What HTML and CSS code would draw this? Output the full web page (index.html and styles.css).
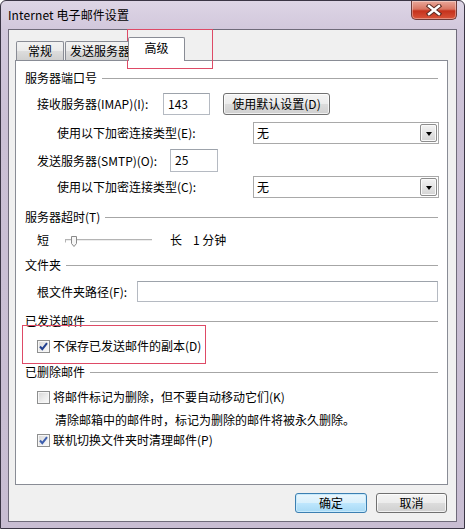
FILE: index.html
```html
<!DOCTYPE html>
<html lang="zh-CN">
<head>
<meta charset="utf-8">
<title>Internet 电子邮件设置</title>
<link rel="stylesheet" href="styles.css">
</head>
<body>
<div class="window">
  <div class="titlebar">
    <span class="title">Internet 电子邮件设置</span>
    <div class="close">
      <svg width="16" height="12" viewBox="0 0 16 12">
        <path d="M3 2 L13 10 M13 2 L3 10" stroke="#5a2a22" stroke-width="4.4" stroke-linecap="square"/>
        <path d="M3 2 L13 10 M13 2 L3 10" stroke="#ffffff" stroke-width="2.4" stroke-linecap="square"/>
      </svg>
    </div>
  </div>
  <div class="client">
    <div class="tabs">
      <div class="tab t1">常规</div>
      <div class="tab t2">发送服务器</div>
      <div class="tab sel">高级</div>
    </div>
    <div class="panel">
      <div class="group r1"><span>服务器端口号</span><i class="line"></i></div>
      <div class="row r2 ind1">
        <span class="lbl w-imap">接收服务器(IMAP)(I):</span>
        <div class="input in-imap">143</div>
        <div class="btn btn-default-set">使用默认设置(D)</div>
      </div>
      <div class="row r3 ind2">
        <span class="lbl w-enc">使用以下加密连接类型(E):</span>
        <div class="combo"><span>无</span><i class="drop"><b></b></i></div>
      </div>
      <div class="row r4 ind1">
        <span class="lbl w-smtp">发送服务器(SMTP)(O):</span>
        <div class="input in-smtp">25</div>
      </div>
      <div class="row r5 ind2">
        <span class="lbl w-enc">使用以下加密连接类型(C):</span>
        <div class="combo"><span>无</span><i class="drop"><b></b></i></div>
      </div>
      <div class="group r6"><span>服务器超时(T)</span><i class="line"></i></div>
      <div class="row r7 ind1">
        <span class="lbl w-short">短</span>
        <svg class="slider" width="87" height="14" viewBox="0 0 87 14">
          <line x1="0" y1="4.5" x2="87" y2="4.5" stroke="#b4b4b4" stroke-width="1"/>
          <line x1="0" y1="5.5" x2="87" y2="5.5" stroke="#ececec" stroke-width="1"/>
          <path d="M0.5 4.5 V7.5" stroke="#b4b4b4" stroke-width="1"/>
          <path d="M6.5 1.5 H11.5 V8.5 L9 11.5 L6.5 8.5 Z" fill="#f6f6f6" stroke="#8a8a8a" stroke-width="1"/>
        </svg>
        <span class="lbl long">长</span>
        <span class="lbl minutes">1 分钟</span>
      </div>
      <div class="group r8"><span>文件夹</span><i class="line"></i></div>
      <div class="row r9 ind1">
        <span class="lbl w-root">根文件夹路径(F):</span>
        <div class="input in-root"></div>
      </div>
      <div class="group r10"><span>已发送邮件</span><i class="line"></i></div>
      <div class="row r11 ind1">
        <span class="check on"><svg width="11" height="11" viewBox="0 0 11 11"><path d="M2 5.5 L4.3 8.2 L9 2.2" fill="none" stroke="#22408f" stroke-width="2"/></svg></span>
        <span class="lbl ctext">不保存已发送邮件的副本(D)</span>
      </div>
      <div class="group r12"><span>已删除邮件</span><i class="line"></i></div>
      <div class="row r13 ind1">
        <span class="check"></span>
        <span class="lbl ctext">将邮件标记为删除，但不要自动移动它们(K)</span>
      </div>
      <div class="row r14 ind3">
        <span class="lbl">清除邮箱中的邮件时，标记为删除的邮件将被永久删除。</span>
      </div>
      <div class="row r15 ind1">
        <span class="check on"><svg width="11" height="11" viewBox="0 0 11 11"><path d="M2 5.5 L4.3 8.2 L9 2.2" fill="none" stroke="#3d5fae" stroke-width="2"/></svg></span>
        <span class="lbl ctext">联机切换文件夹时清理邮件(P)</span>
      </div>
    </div>
    <div class="buttons">
      <div class="btn ok">确定</div>
      <div class="btn cancel">取消</div>
    </div>
  </div>
</div>
<div class="mark mark-tab"></div>
<div class="mark mark-check"></div>
</body>
</html>
```

FILE: styles.css
```css
* { box-sizing: border-box; }
html, body { margin: 0; padding: 0; }
body {
  width: 465px;
  height: 529px;
  overflow: hidden;
  position: relative;
  background: #ffffff;
  font-family: "Noto Sans CJK SC", "Noto Sans", sans-serif;
  font-size: 12px;
  color: #000;
}
.window {
  width: 465px;
  height: 529px;
  border: 1px solid #3a3544;
  border-radius: 6px 6px 0 0;
  background: linear-gradient(180deg, #ddd5e5 0px, #d2c8dc 28px, #cbc0d5 120px, #c8bdd2 100%);
  padding: 0 7px 6px 7px;
  display: flex;
  flex-direction: column;
}
.titlebar {
  height: 28px;
  display: flex;
  align-items: flex-start;
}
.title {
  line-height: 28px;
  font-size: 12px;
  color: #000;
  letter-spacing: 0.1px;
}
.close {
  margin-left: auto;
  width: 46px;
  height: 19px;
  border: 1px solid #6e3b39;
  border-top: none;
  border-radius: 0 0 5px 5px;
  background: linear-gradient(180deg, #e9a89a 0%, #d87562 45%, #c5321c 55%, #d9543a 100%);
  display: flex;
  align-items: center;
  justify-content: center;
  box-shadow: inset 0 0 0 1px rgba(255,255,255,0.35);
}
.client {
  flex: 1;
  border: 1px solid #6f6b7a;
  background: #f0f0f0;
  display: flex;
  flex-direction: column;
}
.tabs {
  display: flex;
  align-items: flex-end;
  height: 23px;
  margin: 7px 0 0 6px;
  position: relative;
  z-index: 2;
}
.tab {
  height: 19px;
  border: 1px solid #898c95;
  border-bottom: none;
  background: linear-gradient(180deg, #f2f2f2 0%, #ebebeb 50%, #dddddd 51%, #cfcfcf 100%);
  display: flex;
  align-items: center;
  justify-content: center;
  line-height: 18px;
  border-radius: 2px 2px 0 0;
}
.t1 { width: 48px; margin-left: 1px; }
.t2 { width: 70px; margin-left: 1px; }
.sel {
  width: 57px;
  height: 24px;
  margin-left: -7px;
  margin-bottom: -1px;
  background: #ffffff;
  padding-bottom: 3px;
}
.panel {
  margin-left: 6px;
  width: 433px;
  height: 425px;
  border: 1px solid #898c95;
  background: #ffffff;
  padding: 8px 9px 0 9px;
  display: flex;
  flex-direction: column;
}
.group {
  height: 18px;
  display: flex;
  align-items: center;
  line-height: 18px;
}
.group .line {
  flex: 1;
  height: 1px;
  margin-left: 5px;
  background: #a6a6a6;
}
.row {
  display: flex;
  align-items: center;
  line-height: 18px;
}
.ind1 { padding-left: 12px; }
.ind2 { padding-left: 32px; }
.ind3 { padding-left: 30px; }
.r2 { height: 22px; margin-top: 6px; }
.r3 { height: 22px; margin-top: 7px; }
.r4 { height: 23px; margin-top: 5px; }
.r5 { height: 22px; margin-top: 4px; }
.r6 { margin-top: 10px; }
.r7 { height: 20px; margin-top: 4px; }
.r8 { margin-top: 6px; }
.r9 { height: 21px; margin-top: 7px; }
.r10 { margin-top: 10px; }
.r11 { height: 20px; margin-top: 6px; }
.r12 { margin-top: 7px; }
.r13 { height: 20px; margin-top: 6px; }
.r14 { height: 20px; margin-top: 3px; }
.r15 { height: 20px; margin-top: 0px; }
.lbl { white-space: nowrap; flex: none; }
.w-imap { width: 126px; }
.w-smtp { width: 133px; }
.w-enc { width: 196px; }
.w-short { width: 28px; }
.w-root { width: 100px; }
.long { margin-left: 18px; width: 23px; }
.input {
  height: 100%;
  border: 1px solid #b5bac2;
  border-top-color: #9da3ab;
  background: #fff;
  padding-left: 4px;
  line-height: 19px;
  flex: none;
}
.in-imap { width: 47px; }
.in-smtp { width: 48px; line-height: 20px; }
.in-root { width: 301px; }
.btn {
  border: 1px solid #707070;
  border-radius: 3px;
  background: linear-gradient(180deg, #f4f4f4 0%, #ececec 48%, #dcdcdc 52%, #d0d0d0 100%);
  box-shadow: inset 0 0 0 1px rgba(255,255,255,0.7);
  display: flex;
  align-items: center;
  justify-content: center;
  line-height: 18px;
  flex: none;
}
.btn-default-set {
  margin-left: 13px;
  width: 107px;
  height: 22px;
}
.combo {
  width: 186px;
  height: 22px;
  border: 1px solid #a9a9a9;
  background: #fff;
  display: flex;
  align-items: center;
  padding: 1px 1px 1px 3px;
  flex: none;
}
.combo span { flex: 1; line-height: 18px; }
.drop {
  width: 17px;
  height: 18px;
  border: 1px solid #8d8d8d;
  border-radius: 2px;
  background: linear-gradient(180deg, #f4f4f4 0%, #e4e4e4 50%, #d4d4d4 100%);
  display: flex;
  align-items: center;
  justify-content: center;
  box-shadow: inset 0 0 0 1px #fafafa;
}
.drop b {
  width: 0;
  height: 0;
  border-left: 3.5px solid transparent;
  border-right: 3.5px solid transparent;
  border-top: 4px solid #000;
  margin-top: 1px;
}
.slider { flex: none; margin-top: 4px; }
.check {
  width: 13px;
  height: 13px;
  flex: none;
  border: 1px solid #8e8f8f;
  background: linear-gradient(135deg, #d6d6d6 0%, #eeeeee 60%, #fafafa 100%);
  box-shadow: inset 0 0 0 1px #f6f6f6;
  display: flex;
  align-items: center;
  justify-content: center;
}
.ctext { margin-left: 3px; }
.buttons {
  display: flex;
  justify-content: flex-end;
  gap: 9px;
  margin-top: 8px;
  padding-right: 9px;
}
.ok, .cancel { height: 20px; }
.ok {
  width: 72px;
  border-color: #3c7fb1;
  background: linear-gradient(180deg, #eaf6fd 0%, #d9f0fc 48%, #bee6fd 52%, #a7d9f5 100%);
  box-shadow: inset 0 0 0 1px #c8eafc;
}
.cancel { width: 71px; }
.mark {
  position: absolute;
  border: 1px solid #de4a66;
}
.mark-tab { left: 127px; top: 29px; width: 86px; height: 40px; }
.mark-check { left: 22px; top: 325px; width: 184px; height: 39px; }
```
